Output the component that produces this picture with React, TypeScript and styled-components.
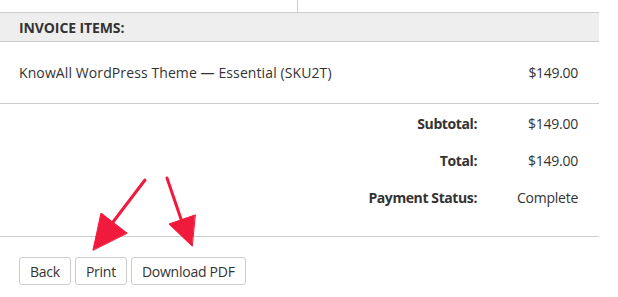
import React from 'react';
import styled, { createGlobalStyle } from 'styled-components';

const GlobalStyle = createGlobalStyle`
  body {
    margin: 0;
    background: #fff;
    font-family: "Open Sans", "Noto Sans", sans-serif;
    color: #333;
  }
`;

const Page = styled.div`
  position: relative;
  width: 599px;
  height: 297px;
`;

const TopCells = styled.div`
  display: grid;
  grid-template-columns: 298px 1fr;
  height: 12px;
`;

const TopCell = styled.div<{ divider?: boolean }>`
  border-right: ${p => (p.divider ? '1px solid #ccc' : 'none')};
`;

const SectionHeader = styled.div`
  background: #eee;
  border-top: 1px solid #ccc;
  border-bottom: 1px solid #ccc;
  height: 28px;
  padding-left: 19px;
  display: flex;
  align-items: center;
  font-size: 14px;
  font-weight: 700;
  letter-spacing: -0.1px;
  color: #333;
`;

const ItemRow = styled.div`
  height: 61px;
  padding: 0 21px 0 19px;
  display: flex;
  align-items: center;
  justify-content: space-between;
  border-bottom: 1px solid #ccc;
  font-size: 14px;
`;

const ItemName = styled.span`
  letter-spacing: 0.1px;
`;

const Price = styled.span`
  letter-spacing: -0.3px;
`;

const Totals = styled.div`
  display: grid;
  grid-template-columns: 1fr 101px;
  grid-auto-rows: 37px;
  padding: 1px 21px 20px 0;
  height: 111px;
  border-bottom: 1px solid #ccc;
  font-size: 14px;
`;

const TotalLabel = styled.div`
  display: flex;
  align-items: center;
  justify-content: flex-end;
  font-weight: 700;
  letter-spacing: -0.4px;
`;

const TotalValue = styled.div`
  display: flex;
  align-items: center;
  justify-content: flex-end;
  letter-spacing: -0.25px;
`;

const Actions = styled.div`
  display: flex;
  gap: 4px;
  padding: 20px 0 0 19px;
`;

const Button = styled.button`
  height: 28px;
  padding: 0 10px;
  background: #fff;
  border: 1px solid #ccc;
  border-radius: 3px;
  font-family: inherit;
  font-size: 14px;
  letter-spacing: -0.25px;
  color: #333;
  cursor: pointer;
`;

const Annotation = styled.svg`
  position: absolute;
  left: 0;
  top: 0;
  pointer-events: none;
`;

const totals = [
  { label: 'Subtotal:', value: '$149.00' },
  { label: 'Total:', value: '$149.00' },
  { label: 'Payment Status:', value: 'Complete' },
];

export default function App() {
  return (
    <>
      <GlobalStyle />
      <Page>
        <TopCells>
          <TopCell divider />
          <TopCell />
        </TopCells>
        <SectionHeader>INVOICE ITEMS:</SectionHeader>
        <ItemRow>
          <ItemName>KnowAll WordPress Theme — Essential (SKU2T)</ItemName>
          <Price>$149.00</Price>
        </ItemRow>
        <Totals>
          {totals.map(t => (
            <React.Fragment key={t.label}>
              <TotalLabel>{t.label}</TotalLabel>
              <TotalValue>{t.value}</TotalValue>
            </React.Fragment>
          ))}
        </Totals>
        <Actions>
          <Button>Back</Button>
          <Button>Print</Button>
          <Button>Download PDF</Button>
        </Actions>
        <Annotation width="618" height="297" viewBox="0 0 618 297">
          <g stroke="#f21a3c" strokeWidth="3" fill="#f21a3c" strokeLinecap="round">
            <line x1="145" y1="180" x2="110" y2="226" />
            <polygon points="93,250 101,213 127,233" strokeWidth="1" />
            <line x1="167" y1="178" x2="182" y2="222" />
            <polygon points="192,246 169,224 195,215" strokeWidth="1" />
          </g>
        </Annotation>
      </Page>
    </>
  );
}
